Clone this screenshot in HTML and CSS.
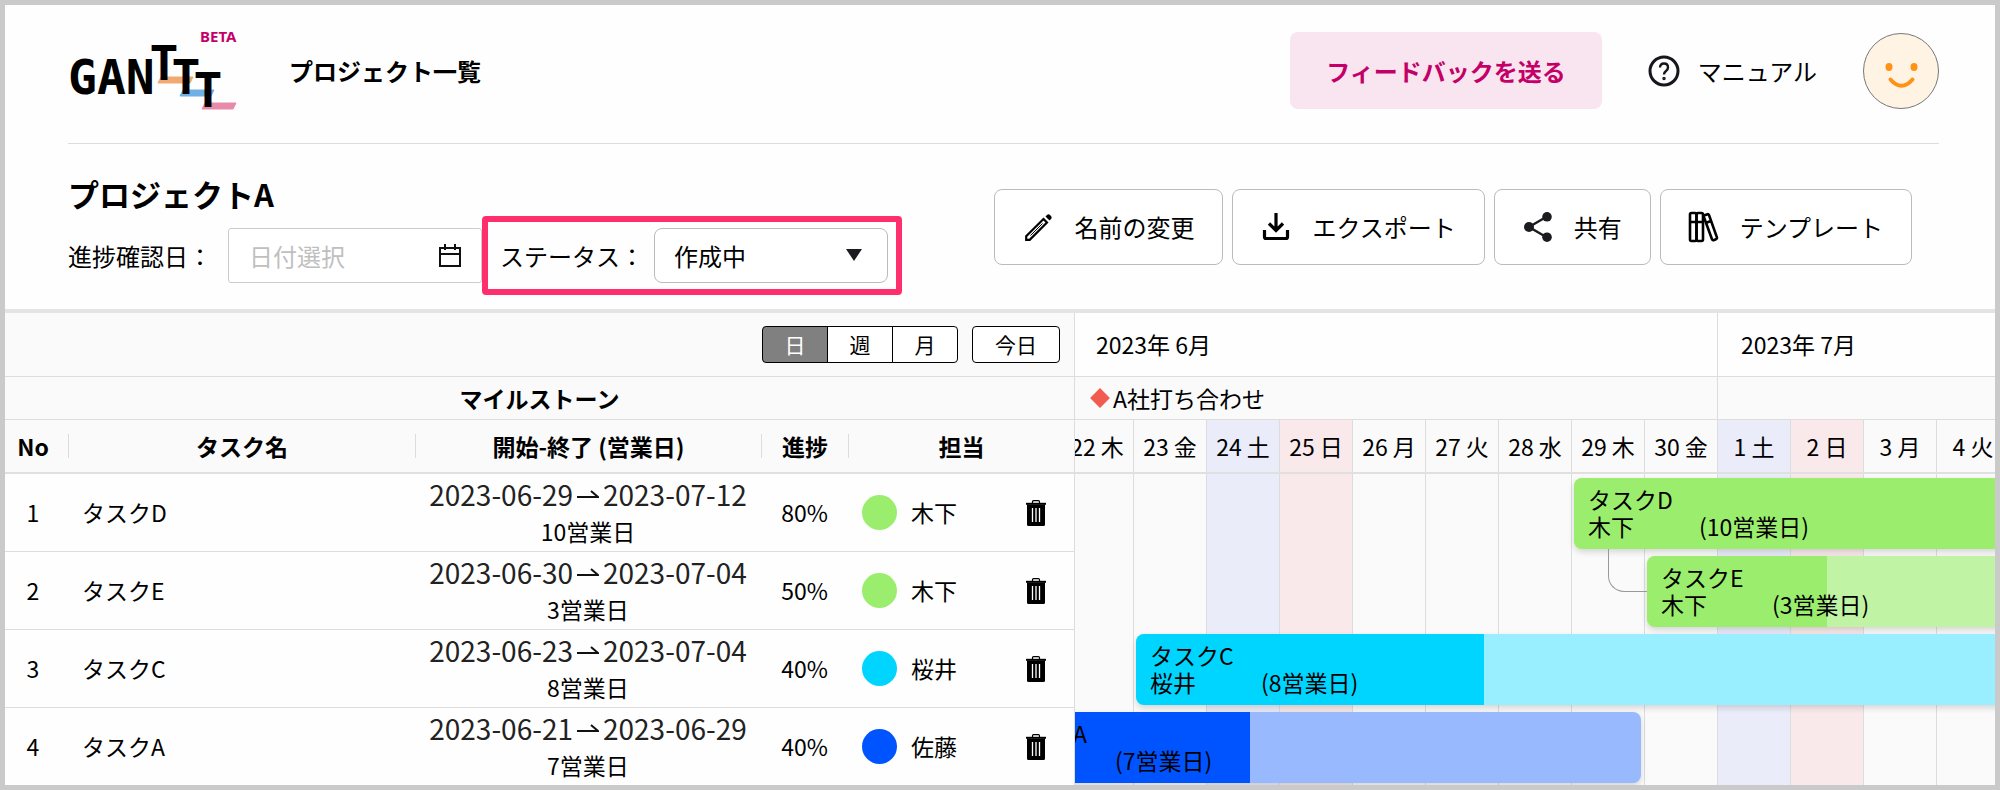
FILE: index.html
```html
<!DOCTYPE html>
<html lang="ja">
<head>
    <meta charset="UTF-8">
    <title>GANTTT</title>
    <link rel="stylesheet" href="styles.css">
</head>
<body>

    <!-- shared icons -->
    <svg class="sprite" aria-hidden="true">
        <symbol id="icon-trash" viewBox="0 0 20 26">
            <path d="M6.500 3V1.800Q6.500 .7 7.600 .7H12.400Q13.500 .7 13.500 1.800V3" fill="none" stroke="#000" stroke-width="1.200"/>
            <path d="M0 2.800H20V4.800H0Z"/>
            <path d="M1 4.500H19V24.500Q19 26 17.500 26H2.500Q1 26 1 24.500Z"/>
            <path d="M6.500 8V22M10 8V22M13.500 8V22" stroke="#fff" stroke-width="1.300"/>
        </symbol>
        <symbol id="icon-arrow" viewBox="0 0 22 10">
            <path d="M0 8H21L14 2" fill="none" stroke="#111" stroke-width="2"/>
        </symbol>
    </svg>

    <div class="app">
        <header class="header">
            <a class="logo" href="#">
                <svg width="170" height="77" viewBox="0 0 170 77">
                    <path d="M93 45H125L122 51H90Z" fill="#f0a973" stroke="#f0a973" stroke-linejoin="round"/>
                    <path d="M115 58H146L143 64H112Z" fill="#70b0e4" stroke="#70b0e4" stroke-linejoin="round"/>
                    <path d="M137 71H168L165 77H134Z" fill="#e88bab" stroke="#e88bab" stroke-linejoin="round"/>
                    <text class="logo-text" x="0" y="62">GAN</text>
                    <text class="logo-text" x="96" y="48" text-anchor="middle">T</text>
                    <text class="logo-text" x="118" y="62" text-anchor="middle">T</text>
                    <text class="logo-text" x="140" y="75" text-anchor="middle">T</text>
                    <text class="logo-beta" x="132" y="10">BETA</text>
                </svg>
            </a>
            <a class="nav-link" href="#">プロジェクト一覧</a>
            <button class="feedback">フィードバックを送る</button>
            <a class="manual" href="#">
                <svg width="32" height="32" viewBox="0 0 32 32" fill="none" stroke="#16161c">
                    <circle cx="16" cy="16" r="14" stroke-width="3"/>
                    <path d="M12 12.500Q12 8.500 16 8.500T20 12.500Q20 14.500 18 16T16 19.500" stroke-width="2.400"/>
                    <circle cx="16" cy="23.500" r="1" stroke-width="1.500"/>
                </svg>
                マニュアル
            </a>
            <button class="avatar" aria-label="アカウント">
                <svg width="74" height="74" viewBox="0 0 74 74">
                    <ellipse cx="25" cy="33" rx="3.500" ry="4" fill="#ff9114"/>
                    <ellipse cx="50" cy="33" rx="3.500" ry="4" fill="#ff9114"/>
                    <path d="M26.500 45.500Q37.500 58 48.500 45.500" fill="none" stroke="#ff9114" stroke-width="4" stroke-linecap="round"/>
                </svg>
            </button>
        </header>

        <section class="project">
            <div>
                <h1>プロジェクトA</h1>
                <div class="fields">
                    <label for="checkDate">進捗確認日：</label>
                    <div class="date-field">
                        <input type="text" id="checkDate" placeholder="日付選択">
                        <svg width="24" height="24" viewBox="0 0 24 24" fill="none" stroke="#111" stroke-width="2">
                            <path d="M2 4H22V22H2ZM2 10H22M7 0V6M17 0V6"/>
                        </svg>
                    </div>
                    <div class="status">
                        <label for="status">ステータス：</label>
                        <div class="select-field">
                            <select id="status">
                                <option>作成中</option>
                            </select>
                            <svg width="16" height="12" viewBox="0 0 16 12"><path d="M0 0H16L8 12Z" fill="#1b1b22"/></svg>
                        </div>
                    </div>
                </div>
            </div>
            <div class="actions">
                <button>
                    <svg width="28" height="30" viewBox="0 0 28 30">
                        <path d="M2.200 27.800V24.300L19.500 7L23 10.500L5.700 27.800Z" fill="none" stroke="#000" stroke-width="2.200"/>
                        <path d="M6.500 23.500L18.500 11.500" stroke="#000" stroke-width="1"/>
                        <path d="M21.500 4.500L23 3Q24.500 1.500 26.500 3.500T27 7L25.500 8.500Z"/>
                    </svg>
                    名前の変更
                </button>
                <button>
                    <svg width="28" height="30" viewBox="0 0 28 30" fill="none" stroke="#000" stroke-width="3.200">
                        <path d="M14 1V18M7 11.500L14 18.500L21 11.500"/>
                        <path d="M2.500 18V25Q2.500 26.500 4 26.500H24Q25.500 26.500 25.500 25V18"/>
                    </svg>
                    エクスポート
                </button>
                <button>
                    <svg width="28" height="30" viewBox="0 0 28 30" fill="#1b1b20">
                        <path d="M23 4.500L5 15L23 25.500" fill="none" stroke="#1b1b20" stroke-width="2.400"/>
                        <circle cx="5" cy="15" r="5"/>
                        <circle cx="23" cy="4.800" r="4.800"/>
                        <circle cx="23" cy="25.200" r="4.800"/>
                    </svg>
                    共有
                </button>
                <button>
                    <svg class="books" width="28" height="30" viewBox="0 0 28 30" fill="none" stroke="#000" stroke-width="2.600">
                        <rect x="0" y="1" width="6.500" height="28" rx="1.500"/>
                        <rect x="6.500" y="1" width="6.500" height="28" rx="1.500"/>
                        <path d="M0 10H13M14 3.500L17.500 2.200Q18.500 2 19 3L27 25.500Q27.300 26.800 26 27.300L23.500 28.200Q22.500 28.500 22 27.300L13.500 4M15.500 11L21 9"/>
                    </svg>
                    テンプレート
                </button>
            </div>
        </section>

        <main class="gantt">
            <div class="tasks">
                <div class="view-bar">
                    <div class="view-switch">
                        <button class="active">日</button>
                        <button>週</button>
                        <button>月</button>
                    </div>
                    <button class="today">今日</button>
                </div>
                <div class="milestone-title">マイルストーン</div>
                <table>
                    <thead>
                        <tr>
                            <th class="col-no"><span>No</span></th>
                            <th class="col-name"><span>タスク名</span></th>
                            <th class="col-date"><span>開始-終了 (営業日)</span></th>
                            <th class="col-progress"><span>進捗</span></th>
                            <th class="col-member"><span>担当</span></th>
                        </tr>
                    </thead>
                    <tbody>
                        <tr>
                            <td class="col-no">1</td>
                            <td class="col-name">タスクD</td>
                            <td class="col-date">
                                <div class="period">2023-06-29<svg><use href="#icon-arrow"/></svg>2023-07-12</div>
                                <div>10営業日</div>
                            </td>
                            <td>80%</td>
                            <td>
                                <div class="member">
                                    <i class="dot green"></i>木下
                                    <button aria-label="削除"><svg><use href="#icon-trash"/></svg></button>
                                </div>
                            </td>
                        </tr>
                        <tr>
                            <td class="col-no">2</td>
                            <td class="col-name">タスクE</td>
                            <td class="col-date">
                                <div class="period">2023-06-30<svg><use href="#icon-arrow"/></svg>2023-07-04</div>
                                <div>3営業日</div>
                            </td>
                            <td>50%</td>
                            <td>
                                <div class="member">
                                    <i class="dot green"></i>木下
                                    <button aria-label="削除"><svg><use href="#icon-trash"/></svg></button>
                                </div>
                            </td>
                        </tr>
                        <tr>
                            <td class="col-no">3</td>
                            <td class="col-name">タスクC</td>
                            <td class="col-date">
                                <div class="period">2023-06-23<svg><use href="#icon-arrow"/></svg>2023-07-04</div>
                                <div>8営業日</div>
                            </td>
                            <td>40%</td>
                            <td>
                                <div class="member">
                                    <i class="dot cyan"></i>桜井
                                    <button aria-label="削除"><svg><use href="#icon-trash"/></svg></button>
                                </div>
                            </td>
                        </tr>
                        <tr>
                            <td class="col-no">4</td>
                            <td class="col-name">タスクA</td>
                            <td class="col-date">
                                <div class="period">2023-06-21<svg><use href="#icon-arrow"/></svg>2023-06-29</div>
                                <div>7営業日</div>
                            </td>
                            <td>40%</td>
                            <td>
                                <div class="member">
                                    <i class="dot blue"></i>佐藤
                                    <button aria-label="削除"><svg><use href="#icon-trash"/></svg></button>
                                </div>
                            </td>
                        </tr>
                    </tbody>
                </table>
            </div>

            <div class="chart">
                <div class="timeline">
                    <div class="months">
                        <div class="june"><span>2023年 6月</span></div>
                        <div class="july"><span>2023年 7月</span></div>
                    </div>
                    <div class="milestones">
                        <div class="june"><i class="diamond"></i>A社打ち合わせ</div>
                        <div class="july"></div>
                    </div>
                    <div class="days">
                        <div></div>
                        <div>22 木</div>
                        <div>23 金</div>
                        <div class="sat">24 土</div>
                        <div class="sun">25 日</div>
                        <div>26 月</div>
                        <div>27 火</div>
                        <div>28 水</div>
                        <div>29 木</div>
                        <div>30 金</div>
                        <div class="sat">1 土</div>
                        <div class="sun">2 日</div>
                        <div>3 月</div>
                        <div>4 火</div>
                    </div>
                    <div class="plot">
                        <div class="columns">
                            <i></i><i></i><i></i><i class="sat"></i><i class="sun"></i><i></i><i></i>
                            <i></i><i></i><i></i><i class="sat"></i><i class="sun"></i><i></i><i></i>
                        </div>
                        <!-- grid-column: first day / number of days -->
                        <div class="bar green" style="grid-column: 9 / span 14">
                            <div class="done" style="width: 80%"></div>
                            <p>タスクD</p>
                            <p><span>木下</span>(10営業日)</p>
                        </div>
                        <div class="bar green" style="grid-column: 10 / span 5">
                            <div class="link"></div>
                            <div class="done" style="width: 50%"></div>
                            <p>タスクE</p>
                            <p><span>木下</span>(3営業日)</p>
                        </div>
                        <div class="bar cyan" style="grid-column: 3 / span 12">
                            <div class="done" style="width: 40%"></div>
                            <p>タスクC</p>
                            <p><span>桜井</span>(8営業日)</p>
                        </div>
                        <div class="bar blue" style="grid-column: 1 / span 9">
                            <div class="done" style="width: 40%"></div>
                            <p>タスクA</p>
                            <p><span>佐藤</span>(7営業日)</p>
                        </div>
                    </div>
                </div>
            </div>
        </main>
    </div>

</body>
</html>
```

FILE: styles.css
```css
* {
    box-sizing: border-box;
}
body {
    margin: 0;
    color: #000;
    font-family: "Noto Sans CJK JP", sans-serif;
    font-size: 24px;
    line-height: 36px;
}
button, input, select {
    font: inherit;
    color: inherit;
    margin: 0;
    padding: 0;
}
a {
    color: inherit;
    text-decoration: none;
}
svg {
    display: block;
    flex: none;
}
p {
    margin: 0;
}
.sprite {
    position: absolute;
    width: 0;
    height: 0;
}
.app {
    display: flex;
    flex-direction: column;
    height: 100vh;
    border: 5px solid #cacaca;
    background: #fefefe;
    overflow: hidden;
}

/* header */
.header {
    display: flex;
    flex: none;
    align-items: center;
    margin: 0 56px 0 63px;
    padding: 27px 0 34px;
    border-bottom: 1px solid #ddd;
}
.logo {
    margin-right: 51px;
}
.logo svg {
    overflow: visible;
}
.logo-text {
    font-family: "DejaVu Sans Mono", monospace;
    font-size: 48px;
    font-weight: bold;
}
.logo-beta {
    font-family: "Noto Sans", sans-serif;
    font-size: 15px;
    font-weight: bold;
    fill: #c40068;
}
.nav-link {
    font-weight: bold;
}
.feedback {
    height: 77px;
    margin-left: auto;
    padding: 0 36px;
    border: 0;
    border-radius: 8px;
    background: #f8e5ef;
    color: #c40068;
    font-weight: bold;
}
.manual {
    display: flex;
    align-items: center;
    gap: 18px;
    margin: 0 46px;
}
.avatar {
    width: 76px;
    height: 76px;
    border: 1px solid #777;
    border-radius: 50%;
    background: #fff3e4;
}

/* project bar */
.project {
    display: flex;
    flex: none;
    justify-content: space-between;
    padding: 28px 83px 14px 63px;
    border-bottom: 4px solid #e4e4e4;
}
h1 {
    margin: 0;
    font-size: 31px;
    line-height: 44px;
}
.fields {
    display: flex;
    align-items: center;
}
.date-field, .select-field {
    position: relative;
}
.date-field {
    width: 254px;
    margin-left: 16px;
}
.date-field input {
    width: 100%;
    height: 55px;
    padding: 0 20px;
    border: 1px solid #ccc;
    border-radius: 3px;
    background: #fff;
}
.date-field input::placeholder {
    color: #bfbfbf;
    opacity: 1;
}
.date-field svg {
    position: absolute;
    top: 16px;
    right: 20px;
}
.status {
    display: flex;
    align-items: center;
    gap: 10px;
    padding: 6px 8px 6px 12px;
    border: 6px solid #ff2f6e;
    border-radius: 4px;
}
.select-field select {
    display: block;
    width: 234px;
    height: 55px;
    padding: 0 19px;
    border: 1px solid #bbb;
    border-radius: 8px;
    background: #fff;
    appearance: none;
}
.select-field svg {
    position: absolute;
    top: 21px;
    right: 26px;
    pointer-events: none;
}
.actions {
    display: flex;
    align-items: flex-start;
    gap: 9px;
    padding-top: 17px;
}
.actions button {
    display: flex;
    align-items: center;
    gap: 22px;
    height: 76px;
    padding: 0 28px 0 29px;
    border: 1px solid #bbb;
    border-radius: 8px;
    background: #fff;
}
.books {
    overflow: visible;
}

/* gantt */
.gantt {
    display: flex;
    flex: 1;
    min-height: 0;
    font-size: 23px;
    background: #fafafa;
}
.tasks {
    flex: none;
    width: 1070px;
    border-right: 1px solid #ddd;
}
.view-bar {
    display: flex;
    justify-content: flex-end;
    align-items: center;
    gap: 14px;
    height: 64px;
    padding-right: 14px;
    border-bottom: 1px solid #ddd;
    font-size: 21px;
}
.view-bar button {
    height: 37px;
    line-height: 33px;
    border: 1px solid #000;
    background: #fff;
}
.view-switch {
    display: flex;
}
.view-switch button {
    width: 66px;
}
.view-switch button + button {
    margin-left: -1px;
}
.view-switch button:first-child {
    border-radius: 4px 0 0 4px;
}
.view-switch button:last-child {
    border-radius: 0 4px 4px 0;
}
.view-bar .active {
    background: #808080;
    color: #fff;
}
.view-bar .today {
    width: 88px;
    border-radius: 4px;
}
.milestone-title {
    height: 43px;
    border-bottom: 1px solid #ddd;
    font-weight: bold;
    line-height: 42px;
    text-align: center;
}
table {
    width: 100%;
    border-spacing: 0;
    table-layout: fixed;
}
th, td {
    padding: 0;
    text-align: center;
}
th {
    height: 54px;
    border-bottom: 2px solid #e0e0e0;
}
th span {
    display: block;
    line-height: 24px;
}
th + th span {
    border-left: 1px solid #ddd;
}
td {
    height: 78px;
    border-bottom: 1px solid #ddd;
    background: #fefefe;
    line-height: 37px;
}
.col-no {
    width: 63px;
    padding-right: 7px;
}
.col-name {
    width: 347px;
}
td.col-name {
    padding-left: 14px;
    text-align: left;
}
.col-date {
    width: 346px;
}
.col-progress {
    width: 87px;
}
.period {
    display: flex;
    justify-content: center;
    align-items: center;
    gap: 4px;
    color: #222;
    font-size: 28px;
}
.period svg {
    width: 22px;
    height: 10px;
}
.member {
    display: flex;
    align-items: center;
    gap: 14px;
    padding: 0 28px 0 14px;
}
.dot {
    width: 35px;
    height: 35px;
    border-radius: 50%;
}
.dot.green {
    background: #9bee6d;
}
.dot.cyan {
    background: #00d5ff;
}
.dot.blue {
    background: #0054ff;
}
.member button {
    margin-left: auto;
    border: 0;
    background: none;
}
.member button svg {
    width: 20px;
    height: 26px;
}

/* chart, scrolled to the middle of the 22nd */
.chart {
    flex: 1;
    min-width: 0;
    overflow: hidden;
}
.timeline {
    width: 1606px;
    margin-left: -87px;
}
.months, .milestones, .days, .plot {
    display: grid;
    grid-template-columns: repeat(22, 73px);
}
.june {
    grid-column: 1 / span 10;
    border-right: 1px solid #ddd;
}
.july {
    grid-column: 11 / span 12;
}
.months {
    height: 64px;
    border-bottom: 1px solid #ddd;
    background: #fefefe;
    line-height: 62px;
}
.months .june {
    padding-left: 108px;
}
.months .july {
    padding-left: 23px;
}
.milestones {
    height: 43px;
    border-bottom: 1px solid #ddd;
    line-height: 42px;
}
.milestones .june {
    display: flex;
    align-items: center;
    gap: 6px;
    padding-left: 105px;
}
.diamond {
    width: 14px;
    height: 14px;
    background: #f25b50;
    transform: rotate(45deg);
}
.days {
    height: 54px;
    border-bottom: 2px solid #e0e0e0;
    line-height: 52px;
    text-align: center;
}
.days div, .columns i {
    border-right: 1px solid #ddd;
}
.sat {
    background: #eaecf9;
}
.sun {
    background: #f9e9ea;
}
.plot {
    grid-template-rows: repeat(4, 78px);
}
.columns {
    display: grid;
    grid-area: 1 / 1 / 5 / 15;
    grid-template-columns: repeat(14, 73px);
}
.bar {
    position: relative;
    margin: 4px 4px 3px 2px;
    padding: 8px 14px;
    border-radius: 8px;
    box-shadow: 0 3px 6px rgba(0, 0, 0, 0.15);
    line-height: 27px;
    white-space: nowrap;
}
.bar:nth-child(2) {
    grid-row: 1;
}
.bar:nth-child(3) {
    grid-row: 2;
}
.bar:nth-child(4) {
    grid-row: 3;
}
.bar:nth-child(5) {
    grid-row: 4;
}
.bar p {
    position: relative;
}
.bar span {
    display: inline-block;
    width: 111px;
}
.done {
    position: absolute;
    top: 0;
    left: 0;
    height: 100%;
    border-radius: 8px 0 0 8px;
}
.bar.green {
    background: #c0f4a4;
}
.bar.green .done {
    background: #9bee6d;
}
.bar.cyan {
    background: #99eeff;
}
.bar.cyan .done {
    background: #00d5ff;
}
.bar.blue {
    background: #99b9ff;
}
.bar.blue .done {
    background: #0054ff;
}
.link {
    position: absolute;
    top: -7px;
    left: -39px;
    width: 39px;
    height: 43px;
    border: solid #999;
    border-width: 0 0 1px 1px;
    border-bottom-left-radius: 16px;
}
```
